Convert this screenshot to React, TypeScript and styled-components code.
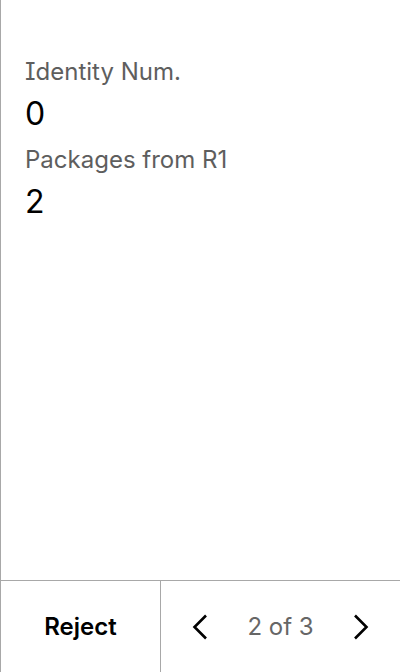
import React from "react";
import styled, { createGlobalStyle } from "styled-components";

const Global = createGlobalStyle`
  html, body { margin: 0; padding: 0; background: #fff; }
  body {
    font-family: Inter, "Noto Sans", sans-serif;
    font-feature-settings: "cv08" 1;
  }
`;

const Screen = styled.div`
  width: 400px;
  height: 672px;
  box-sizing: border-box;
  border-left: 1px solid #a8a8a8;
  display: flex;
  flex-direction: column;
  background: #fff;
`;

const Content = styled.div`
  flex: 1;
  padding: 56px 24px 0 24px;
  display: flex;
  flex-direction: column;
  align-items: flex-start;
`;

const Label = styled.div<{ $first?: boolean }>`
  font-size: 24px;
  line-height: 32px;
  color: #5e5e5e;
  margin-top: ${(p) => (p.$first ? "0" : "10px")};
`;

const Value = styled.div`
  font-size: 32px;
  line-height: 40px;
  color: #000;
  margin-top: 6px;
`;

const Footer = styled.div`
  height: 92px;
  box-sizing: border-box;
  border-top: 1px solid #a8a8a8;
  display: grid;
  grid-template-columns: 160px 1fr;
`;

const RejectButton = styled.button`
  all: unset;
  box-sizing: border-box;
  display: flex;
  align-items: center;
  justify-content: center;
  border-right: 1px solid #a8a8a8;
  font-family: Inter, "Noto Sans", sans-serif;
  font-weight: 600;
  font-size: 24px;
  color: #000;
`;

const Pager = styled.div`
  display: flex;
  align-items: center;
  justify-content: space-between;
  padding: 0 30px;
`;

const PageText = styled.span`
  font-size: 24px;
  color: #666;
`;

const ArrowButton = styled.button`
  all: unset;
  display: flex;
  align-items: center;
  justify-content: center;
  width: 18px;
  height: 28px;
`;

const Chevron = ({ dir }: { dir: "left" | "right" }) => (
  <svg width="16" height="26" viewBox="0 0 16 26" fill="none">
    <path
      d={dir === "left" ? "M14 1.5 L2.5 13 L14 24.5" : "M2 1.5 L13.5 13 L2 24.5"}
      stroke="#000"
      strokeWidth="2.6"
      strokeLinecap="butt"
      strokeLinejoin="miter"
    />
  </svg>
);

export default function App() {
  return (
    <>
      <Global />
      <Screen>
        <Content>
          <Label $first>Identity Num.</Label>
          <Value>0</Value>
          <Label>Packages from R1</Label>
          <Value>2</Value>
        </Content>
        <Footer>
          <RejectButton>Reject</RejectButton>
          <Pager>
            <ArrowButton aria-label="Previous">
              <Chevron dir="left" />
            </ArrowButton>
            <PageText>2 of 3</PageText>
            <ArrowButton aria-label="Next">
              <Chevron dir="right" />
            </ArrowButton>
          </Pager>
        </Footer>
      </Screen>
    </>
  );
}
